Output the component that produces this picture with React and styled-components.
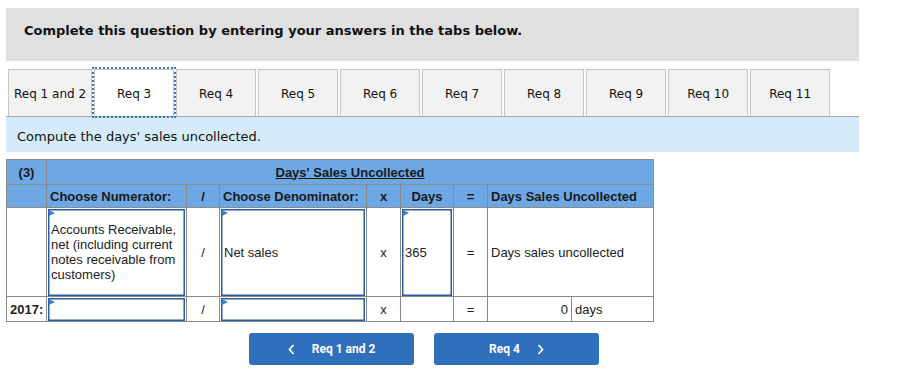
import React from "react";
import styled, { createGlobalStyle } from "styled-components";

const GlobalStyle = createGlobalStyle`
  body {
    margin: 0;
    background: #fff;
    font-family: "DejaVu Sans", Verdana, sans-serif;
  }
`;

const Page = styled.div`
  width: 853px;
  padding: 8px 0 0 6px;
`;

const Banner = styled.div`
  height: 53px;
  box-sizing: border-box;
  background: #e0e0e0;
  padding: 15px 0 0 18px;
  font-size: 13px;
  font-weight: bold;
  color: #111;
`;

const TabBar = styled.div`
  display: flex;
  gap: 2px;
  margin-top: 8px;
  padding-left: 2px;
  border-bottom: 1px solid #a4a4a4;
`;

const Tab = styled.div`
  height: 47px;
  min-width: 80px;
  box-sizing: border-box;
  padding: 2px 5px 0;
  display: flex;
  align-items: center;
  justify-content: center;
  border: 1px solid #c6c6c6;
  border-bottom: none;
  background: ${(p) => (p.$active ? "#fff" : "#f2f2f2")};
  outline: ${(p) => (p.$active ? "2px dotted #3b78c4" : "none")};
  font-size: 12px;
  color: #111;
  white-space: nowrap;
`;

const Prompt = styled.div`
  height: 35px;
  box-sizing: border-box;
  display: flex;
  align-items: center;
  padding: 3px 0 0 11px;
  background: #d6ebf9;
  font-size: 13px;
  color: #111;
`;

const Grid = styled.table`
  margin-top: 7px;
  width: 647px;
  border-collapse: collapse;
  table-layout: fixed;
  font-family: "Liberation Sans", Arial, sans-serif;
  font-size: 13px;
  color: #222;
`;

const Row = styled.tr`
  height: ${(p) => p.$h}px;
`;

const HeadCell = styled.td`
  padding: 0 3px;
  border: 1px solid #8a8a8a;
  background: #6da8e5;
  font-weight: bold;
  color: #1a1a1a;
  text-align: ${(p) => p.$align || "center"};
`;

const Title = styled.span`
  text-decoration: underline;
`;

const Cell = styled.td`
  padding: ${(p) => (p.$flush ? "0" : "0 3px")};
  border: 1px solid #8a8a8a;
  background: #fff;
  text-align: ${(p) => p.$align || "center"};
  font-weight: ${(p) => (p.$bold ? "bold" : "normal")};
  vertical-align: middle;
`;

const Field = styled.div`
  position: relative;
  height: ${(p) => p.$h}px;
  margin: 0 1px;
  box-sizing: border-box;
  display: flex;
  align-items: center;
  padding: 0 2px;
  border: 1px solid #2a5d9f;
  box-shadow: inset 0 0 0 0.5px #2a5d9f;
  line-height: 15px;
  text-align: left;

  &::before {
    content: "";
    position: absolute;
    top: 0;
    left: 0;
    border-left: 6px solid #3c7fd9;
    border-top: 3px solid transparent;
    border-bottom: 3px solid transparent;
  }
`;

const NavRow = styled.div`
  display: flex;
  gap: 20px;
  margin-top: 11px;
  padding-left: 243px;
`;

const NavButton = styled.button`
  width: 165px;
  height: 32px;
  display: flex;
  align-items: center;
  justify-content: center;
  gap: 17px;
  border: none;
  border-radius: 3px;
  background: #2e70bc;
  color: #fff;
  font-family: Roboto, "Liberation Sans", sans-serif;
  font-size: 12px;
  font-weight: bold;
`;

const Chevron = ({ dir }) => (
  <svg width="7" height="11" viewBox="0 0 7 11">
    <path
      d={dir === "left" ? "M5.5 1 L1.5 5.5 L5.5 10" : "M1.5 1 L5.5 5.5 L1.5 10"}
      fill="none"
      stroke="#fff"
      strokeWidth="1.8"
    />
  </svg>
);

const tabs = ["Req 1 and 2", "Req 3", "Req 4", "Req 5", "Req 6", "Req 7", "Req 8", "Req 9", "Req 10", "Req 11"];
const widths = [40, 140, 33, 147, 34, 53, 34, 84, 82];

const App = () => (
  <Page>
    <GlobalStyle />
    <Banner>Complete this question by entering your answers in the tabs below.</Banner>
    <TabBar>
      {tabs.map((t) => (
        <Tab key={t} $active={t === "Req 3"}>
          {t}
        </Tab>
      ))}
    </TabBar>
    <Prompt>Compute the days' sales uncollected.</Prompt>

    <Grid>
      <colgroup>
        {widths.map((w, i) => (
          <col key={i} style={{ width: w }} />
        ))}
      </colgroup>
      <tbody>
        <Row $h={25}>
          <HeadCell>(3)</HeadCell>
          <HeadCell colSpan={8}>
            <Title>Days' Sales Uncollected</Title>
          </HeadCell>
        </Row>
        <Row $h={23}>
          <HeadCell />
          <HeadCell $align="left">Choose Numerator:</HeadCell>
          <HeadCell>/</HeadCell>
          <HeadCell $align="left">Choose Denominator:</HeadCell>
          <HeadCell>x</HeadCell>
          <HeadCell>Days</HeadCell>
          <HeadCell>=</HeadCell>
          <HeadCell colSpan={2} $align="left">Days Sales Uncollected</HeadCell>
        </Row>
        <Row $h={89}>
          <Cell />
          <Cell $flush>
            <Field $h={87}>
              Accounts Receivable, net (including current notes receivable from customers)
            </Field>
          </Cell>
          <Cell>/</Cell>
          <Cell $flush>
            <Field $h={87}>Net sales</Field>
          </Cell>
          <Cell>x</Cell>
          <Cell $flush>
            <Field $h={87}>365</Field>
          </Cell>
          <Cell>=</Cell>
          <Cell colSpan={2} $align="left">Days sales uncollected</Cell>
        </Row>
        <Row $h={25}>
          <Cell $align="left" $bold>2017:</Cell>
          <Cell $flush>
            <Field $h={23} />
          </Cell>
          <Cell>/</Cell>
          <Cell $flush>
            <Field $h={23} />
          </Cell>
          <Cell>x</Cell>
          <Cell />
          <Cell>=</Cell>
          <Cell $align="right">0</Cell>
          <Cell $align="left">days</Cell>
        </Row>
      </tbody>
    </Grid>

    <NavRow>
      <NavButton>
        <Chevron dir="left" />
        Req 1 and 2
      </NavButton>
      <NavButton>
        Req 4
        <Chevron dir="right" />
      </NavButton>
    </NavRow>
  </Page>
);

export default App;
